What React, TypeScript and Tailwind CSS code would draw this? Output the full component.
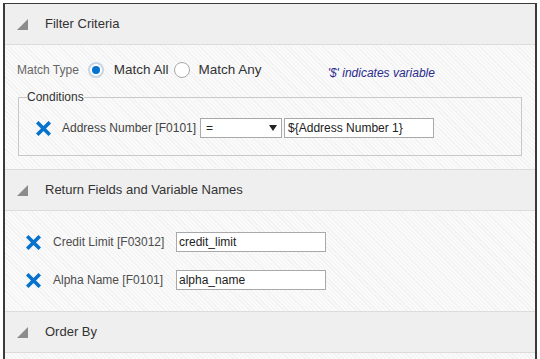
import React from 'react'

const stripe =
  'bg-[#f8f8f8] bg-[image:repeating-linear-gradient(45deg,#fafafa_0px,#fafafa_2px,#f2f2f2_2px,#f2f2f2_3px)]'

function SectionHeader({ title }: { title: string }) {
  return (
    <div className="h-[41px] flex items-center bg-[#efefef] border-b border-[#dcdcdc]">
      <svg className="ml-[12px] w-[11px] h-[11px]" viewBox="0 0 10 10">
        <polygon points="10,0 10,10 0,10" fill="#8c8c8c" />
      </svg>
      <span className="ml-[17px] text-[13px] text-[#333]">{title}</span>
    </div>
  )
}

function RemoveIcon() {
  return (
    <svg className="w-[15px] h-[15px] shrink-0" viewBox="0 0 15 15">
      <path d="M2.5 2.5L12.5 12.5M12.5 2.5L2.5 12.5" stroke="#0572ce" strokeWidth={3.6} strokeLinecap="square" />
    </svg>
  )
}

function Radio({ checked }: { checked?: boolean }) {
  return (
    <span
      className={
        checked
          ? 'w-[16px] h-[16px] rounded-full border-2 border-[#c6d4e3] bg-white flex items-center justify-center shrink-0'
          : 'block w-[16px] h-[16px] rounded-full border border-[#a8a8a8] bg-white shrink-0'
      }
    >
      {checked && <span className="w-[8px] h-[8px] rounded-full bg-[#0572ce]" />}
    </span>
  )
}

export default function App() {
  const fields = [
    { label: 'Credit Limit [F03012]', value: 'credit_limit' },
    { label: 'Alpha Name [F0101]', value: 'alpha_name' },
  ]

  return (
    <div className="w-[540px] h-[359px] bg-white overflow-hidden pl-[3px] pt-[3px] font-['Liberation_Sans',Arial,sans-serif]">
      <div className="w-[534px] h-[356px] border-x-2 border-t border-[#3a3a3a] overflow-hidden">
        {/* Filter Criteria */}
        <SectionHeader title="Filter Criteria" />
        <div className={`${stripe} h-[125px] border-b border-[#dcdcdc] pt-[15px]`}>
          <div className="h-[20px] flex items-center pl-[12px]">
            <span className="text-[12px] text-[#666]">Match Type</span>
            <span className="ml-[9px]"><Radio checked /></span>
            <span className="ml-[10px] text-[13.5px] text-[#333]">Match All</span>
            <span className="ml-[5px]"><Radio /></span>
            <span className="ml-[9px] text-[13.5px] text-[#333]">Match Any</span>
            <span className="ml-[66px] mt-[5px] text-[12px] italic text-[#2b2b8c]">'$' indicates variable</span>
          </div>
          <fieldset className="mt-[10px] mx-[13px] border border-[#c8c8c8]">
            <legend className="ml-[8px] text-[12px] leading-[14px] text-[#333]">Conditions</legend>
            <div className="pt-[14px] pb-[17px] pl-[17px] flex items-center h-[51px]">
              <RemoveIcon />
              <span className="ml-[11px] text-[12px] text-[#444]">Address Number [F0101]</span>
              <div className="ml-[4px] w-[82px] h-[20px] border border-[#a9a9a9] bg-white flex items-center justify-between pl-[5px] pr-[4px]">
                <span className="text-[12px] text-[#222]">=</span>
                <svg className="w-[8px] h-[6px]" viewBox="0 0 8 6">
                  <polygon points="0,0 8,0 4,6" fill="#222" />
                </svg>
              </div>
              <div className="ml-[2px] w-[150px] h-[20px] border border-[#a9a9a9] bg-white flex items-center pl-[3px] text-[12px] text-[#222]">
                {'${Address Number 1}'}
              </div>
            </div>
          </fieldset>
        </div>

        {/* Return Fields */}
        <SectionHeader title="Return Fields and Variable Names" />
        <div className={`${stripe} h-[101px] border-b border-[#dcdcdc] pt-[21px] flex flex-col gap-[18px]`}>
          {fields.map((f) => (
            <div key={f.value} className="h-[20px] flex items-center pl-[21px]">
              <RemoveIcon />
              <span className="ml-[12px] w-[123px] text-[12px] text-[#4d4d4d]">{f.label}</span>
              <div className="w-[150px] h-[20px] border border-[#a9a9a9] bg-white flex items-center pl-[2px] text-[12px] text-[#222]">
                {f.value}
              </div>
            </div>
          ))}
        </div>

        {/* Order By */}
        <SectionHeader title="Order By" />
        <div className={`${stripe} h-[40px]`} />
      </div>
    </div>
  )
}
